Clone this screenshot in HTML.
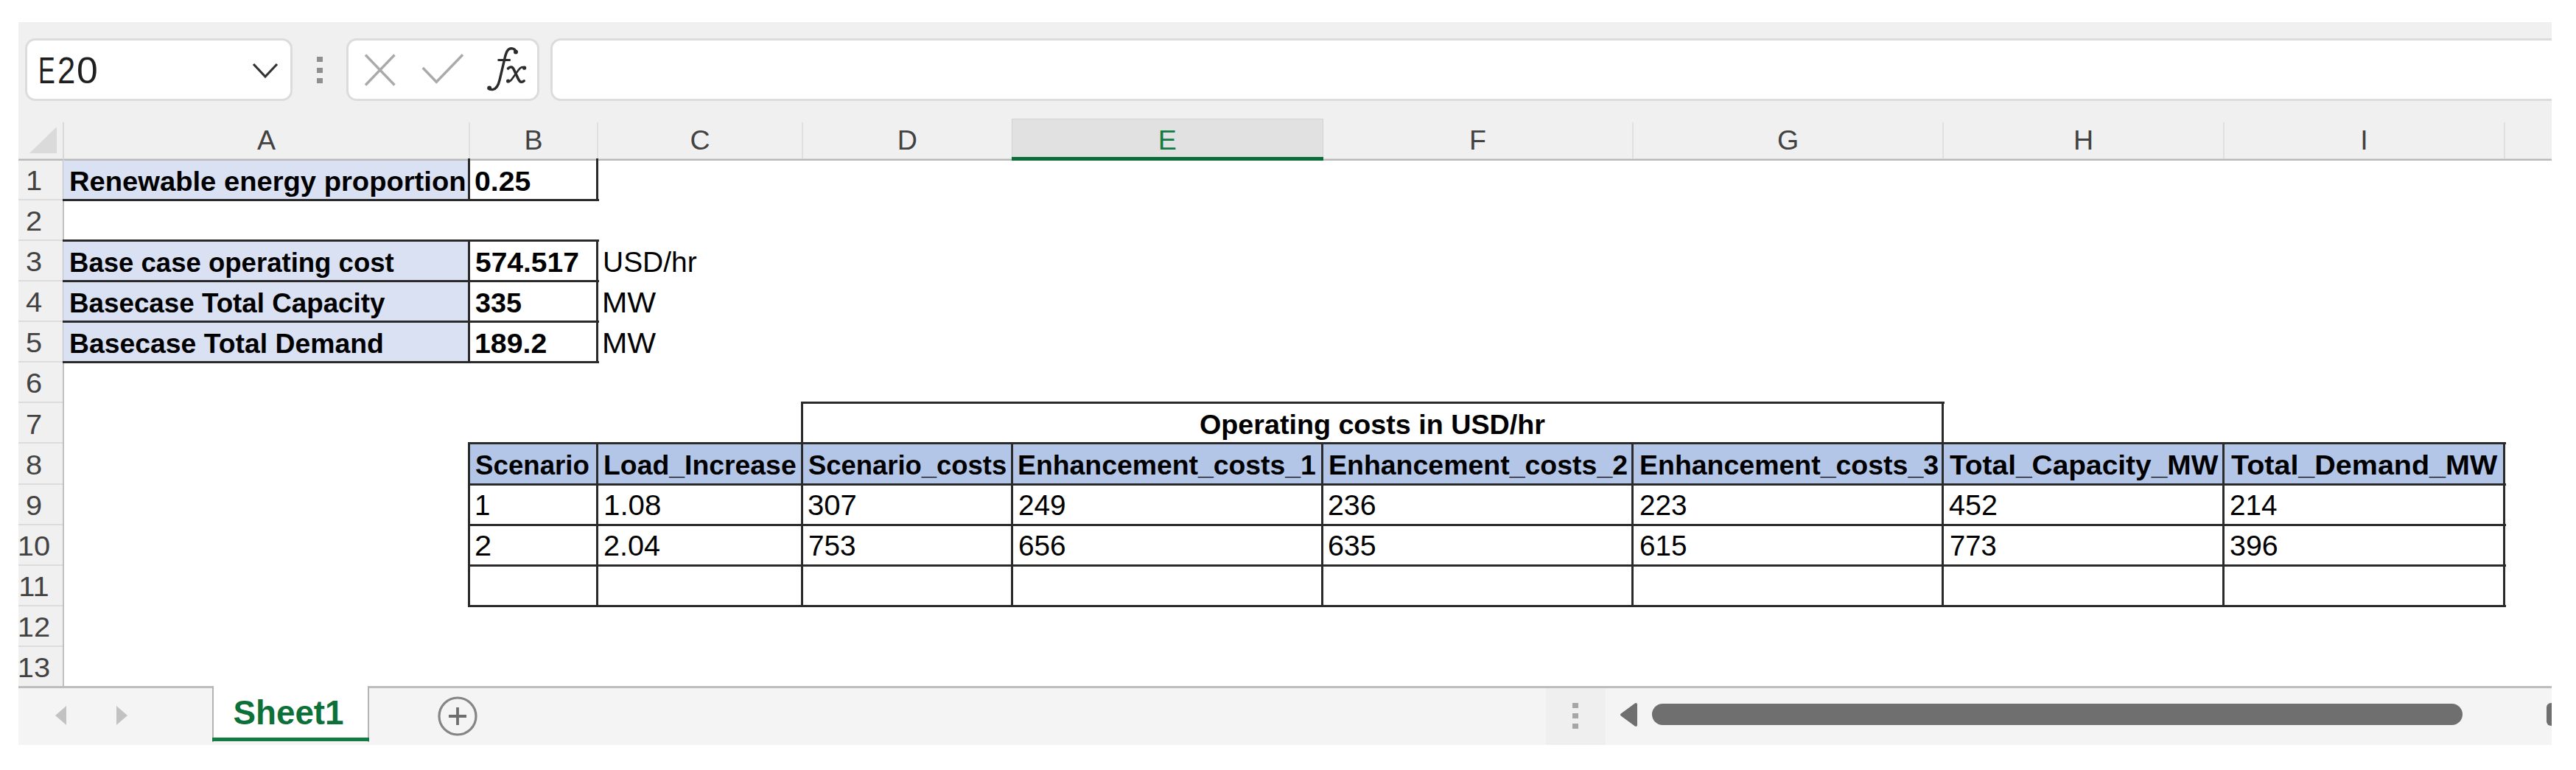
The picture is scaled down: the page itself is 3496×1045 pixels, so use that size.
<!DOCTYPE html><html><head><meta charset="utf-8"><style>
*{margin:0;padding:0;box-sizing:border-box}
html,body{width:3496px;height:1045px;background:#fff;overflow:hidden;position:relative;font-family:"Liberation Sans",sans-serif}
.a{position:absolute}
.t{position:absolute;white-space:pre;line-height:1;color:#000}
.b{font-weight:bold}
.hl{position:absolute;background:#2a2a2a}
</style></head><body><div class="a" style="left:25px;top:30px;width:3438px;height:981px;background:#f0f0f0"></div>
<div class="a" style="left:34px;top:52px;width:363px;height:85px;background:#fff;border:3px solid #dcdcdc;border-radius:14px"></div>
<div class="t" style="left:52.28px;top:71.8px;font-size:49.8px;color:#1f1f1f;transform:scaleX(0.686);transform-origin:0 0">E</div>
<div class="t" style="left:77.98px;top:71.8px;font-size:49.8px;color:#1f1f1f;transform:scaleX(0.876);transform-origin:0 0">2</div>
<div class="t" style="left:103.50px;top:71.8px;font-size:49.8px;color:#1f1f1f;transform:scaleX(1.038);transform-origin:0 0">0</div>
<svg class="a" style="left:335px;top:80px" width="50" height="32" viewBox="0 0 50 32"><path d="M9 7 L25 24 L41 7" fill="none" stroke="#333" stroke-width="3.2"/></svg>
<div class="a" style="left:430px;top:77px;width:8px;height:7px;background:#8f8f8f"></div>
<div class="a" style="left:430px;top:91.5px;width:8px;height:7px;background:#8f8f8f"></div>
<div class="a" style="left:430px;top:106px;width:8px;height:7px;background:#8f8f8f"></div>
<div class="a" style="left:470px;top:52px;width:262px;height:85px;background:#fff;border:3px solid #dcdcdc;border-radius:14px"></div>
<svg class="a" style="left:490px;top:70px" width="52" height="52" viewBox="0 0 52 52"><path d="M6 4.5 L45.5 45.5 M45.5 4.5 L6 45.5" fill="none" stroke="#aaaaaa" stroke-width="3.4"/></svg>
<svg class="a" style="left:570px;top:70px" width="64" height="50" viewBox="0 0 64 50"><path d="M3.8 22 L22.3 41.3 L58 4.3" fill="none" stroke="#aaaaaa" stroke-width="3.4"/></svg>
<svg class="a" style="left:0;top:0" width="760" height="140" viewBox="0 0 760 140"><path d="M699.8 70.2 C699.5 65.5 692 63.8 688.5 69 C686.6 72 685.6 76 684.6 81 L678.2 108 C676.6 115 674 121 668.5 121.6 C666 121.8 664.4 120.8 663.8 119.8" fill="none" stroke="#2b2b2b" stroke-width="3.4" stroke-linecap="round"/><circle cx="700" cy="70.5" r="3" fill="#2b2b2b"/><circle cx="664.2" cy="119.6" r="3" fill="#2b2b2b"/><path d="M675.5 81.5 H692.8" stroke="#2b2b2b" stroke-width="3"/><path d="M689.5 93 C692 90.2 695.5 90 697.2 94 L703.8 108 C705.6 111.8 708.6 112.2 711.2 109.8" fill="none" stroke="#2b2b2b" stroke-width="3.6" stroke-linecap="round"/><path d="M711.8 92 C709.6 90.2 706.8 91 704 94.6 L695 107 C693 110 691 111.2 689 109.8" fill="none" stroke="#2b2b2b" stroke-width="2.6" stroke-linecap="round"/><circle cx="711.6" cy="92.2" r="2.6" fill="#2b2b2b"/><circle cx="689.6" cy="110" r="2.6" fill="#2b2b2b"/></svg>
<div class="a" style="left:747px;top:52px;width:2800px;height:85px;background:#fff;border:3px solid #dcdcdc;border-radius:14px"></div>
<div class="a" style="left:3463px;top:0;width:40px;height:1045px;background:#fff"></div>
<div class="a" style="left:25px;top:214.5px;width:3438px;height:1px;background:#d6d6d6"></div>
<div class="a" style="left:25px;top:215.5px;width:3438px;height:2px;background:#b9b9b9"></div>
<div class="a" style="left:84.5px;top:166px;width:2.5px;height:50px;background:#d9d9d9"></div>
<div class="a" style="left:84.5px;top:216px;width:2.5px;height:716px;background:#c0c0c0"></div>
<svg class="a" style="left:40px;top:172px" width="38" height="36"><path d="M37 0 L37 36 L0 36 Z" fill="#dadada"/></svg>
<div class="a" style="left:87px;top:217.5px;width:3376px;height:714.5px;background:#fff"></div>
<div class="a" style="left:636.0px;top:166px;width:2px;height:49px;background:#e0e0e0"></div>
<div class="a" style="left:810.0px;top:166px;width:2px;height:49px;background:#e0e0e0"></div>
<div class="a" style="left:1088.0px;top:166px;width:2px;height:49px;background:#e0e0e0"></div>
<div class="a" style="left:1372.5px;top:166px;width:2px;height:49px;background:#e0e0e0"></div>
<div class="a" style="left:1794.0px;top:166px;width:2px;height:49px;background:#e0e0e0"></div>
<div class="a" style="left:2215.0px;top:166px;width:2px;height:49px;background:#e0e0e0"></div>
<div class="a" style="left:2636.0px;top:166px;width:2px;height:49px;background:#e0e0e0"></div>
<div class="a" style="left:3017.0px;top:166px;width:2px;height:49px;background:#e0e0e0"></div>
<div class="a" style="left:3398.0px;top:166px;width:2px;height:49px;background:#e0e0e0"></div>
<div class="a" style="left:1372.5px;top:160.5px;width:423.5px;height:57px;background:#e1e1e1;border:1.5px solid #d2d2d2;border-bottom:none"></div>
<div class="a" style="left:1372.5px;top:212.5px;width:423.5px;height:5.3px;background:#0a6c37"></div>
<div class="t" style="left:86px;width:551px;text-align:center;top:171.9px;font-size:37.6px;color:#424242">A</div>
<div class="t" style="left:637px;width:174px;text-align:center;top:171.9px;font-size:37.6px;color:#424242">B</div>
<div class="t" style="left:811px;width:278px;text-align:center;top:171.9px;font-size:37.6px;color:#424242">C</div>
<div class="t" style="left:1089px;width:284.5px;text-align:center;top:171.9px;font-size:37.6px;color:#424242">D</div>
<div class="t" style="left:1373.5px;width:421.5px;text-align:center;top:171.9px;font-size:37.6px;color:#107c41">E</div>
<div class="t" style="left:1795px;width:421px;text-align:center;top:171.9px;font-size:37.6px;color:#424242">F</div>
<div class="t" style="left:2216px;width:421px;text-align:center;top:171.9px;font-size:37.6px;color:#424242">G</div>
<div class="t" style="left:2637px;width:381px;text-align:center;top:171.9px;font-size:37.6px;color:#424242">H</div>
<div class="t" style="left:3018px;width:381px;text-align:center;top:171.9px;font-size:37.6px;color:#424242">I</div>
<div class="a" style="left:25px;top:270.1px;width:60px;height:2px;background:#dcdcdc"></div>
<div class="t" style="left:16px;width:60px;text-align:center;top:227.1px;font-size:37.6px;color:#424242;transform:scaleX(1.06);transform-origin:30px 0">1</div>
<div class="a" style="left:25px;top:325.1px;width:60px;height:2px;background:#dcdcdc"></div>
<div class="t" style="left:16px;width:60px;text-align:center;top:282.2px;font-size:37.6px;color:#424242;transform:scaleX(1.06);transform-origin:30px 0">2</div>
<div class="a" style="left:25px;top:380.2px;width:60px;height:2px;background:#dcdcdc"></div>
<div class="t" style="left:16px;width:60px;text-align:center;top:337.3px;font-size:37.6px;color:#424242;transform:scaleX(1.06);transform-origin:30px 0">3</div>
<div class="a" style="left:25px;top:435.2px;width:60px;height:2px;background:#dcdcdc"></div>
<div class="t" style="left:16px;width:60px;text-align:center;top:392.3px;font-size:37.6px;color:#424242;transform:scaleX(1.06);transform-origin:30px 0">4</div>
<div class="a" style="left:25px;top:490.3px;width:60px;height:2px;background:#dcdcdc"></div>
<div class="t" style="left:16px;width:60px;text-align:center;top:447.4px;font-size:37.6px;color:#424242;transform:scaleX(1.06);transform-origin:30px 0">5</div>
<div class="a" style="left:25px;top:545.4px;width:60px;height:2px;background:#dcdcdc"></div>
<div class="t" style="left:16px;width:60px;text-align:center;top:502.4px;font-size:37.6px;color:#424242;transform:scaleX(1.06);transform-origin:30px 0">6</div>
<div class="a" style="left:25px;top:600.4px;width:60px;height:2px;background:#dcdcdc"></div>
<div class="t" style="left:16px;width:60px;text-align:center;top:557.5px;font-size:37.6px;color:#424242;transform:scaleX(1.06);transform-origin:30px 0">7</div>
<div class="a" style="left:25px;top:655.5px;width:60px;height:2px;background:#dcdcdc"></div>
<div class="t" style="left:16px;width:60px;text-align:center;top:612.6px;font-size:37.6px;color:#424242;transform:scaleX(1.06);transform-origin:30px 0">8</div>
<div class="a" style="left:25px;top:710.5px;width:60px;height:2px;background:#dcdcdc"></div>
<div class="t" style="left:16px;width:60px;text-align:center;top:667.6px;font-size:37.6px;color:#424242;transform:scaleX(1.06);transform-origin:30px 0">9</div>
<div class="a" style="left:25px;top:765.6px;width:60px;height:2px;background:#dcdcdc"></div>
<div class="t" style="left:16px;width:60px;text-align:center;top:722.7px;font-size:37.6px;color:#424242;transform:scaleX(1.06);transform-origin:30px 0">10</div>
<div class="a" style="left:25px;top:820.7px;width:60px;height:2px;background:#dcdcdc"></div>
<div class="t" style="left:16px;width:60px;text-align:center;top:777.7px;font-size:37.6px;color:#424242;transform:scaleX(1.06);transform-origin:30px 0">11</div>
<div class="a" style="left:25px;top:875.7px;width:60px;height:2px;background:#dcdcdc"></div>
<div class="t" style="left:16px;width:60px;text-align:center;top:832.8px;font-size:37.6px;color:#424242;transform:scaleX(1.06);transform-origin:30px 0">12</div>
<div class="a" style="left:25px;top:930.8px;width:60px;height:2px;background:#dcdcdc"></div>
<div class="t" style="left:16px;width:60px;text-align:center;top:887.9px;font-size:37.6px;color:#424242;transform:scaleX(1.06);transform-origin:30px 0">13</div>
<div class="a" style="left:86px;top:216.5px;width:551px;height:55.06px;background:#d9e1f2"></div>
<div class="a" style="left:86px;top:326.62px;width:551px;height:55.06px;background:#d9e1f2"></div>
<div class="a" style="left:86px;top:381.68px;width:551px;height:55.06px;background:#d9e1f2"></div>
<div class="a" style="left:86px;top:436.74px;width:551px;height:55.06px;background:#d9e1f2"></div>
<div class="a" style="left:637px;top:601.9200000000001px;width:174px;height:55.06px;background:#b4c6e7"></div>
<div class="a" style="left:811px;top:601.9200000000001px;width:278px;height:55.06px;background:#b4c6e7"></div>
<div class="a" style="left:1089px;top:601.9200000000001px;width:284.5px;height:55.06px;background:#b4c6e7"></div>
<div class="a" style="left:1373.5px;top:601.9200000000001px;width:421.5px;height:55.06px;background:#b4c6e7"></div>
<div class="a" style="left:1795px;top:601.9200000000001px;width:421px;height:55.06px;background:#b4c6e7"></div>
<div class="a" style="left:2216px;top:601.9200000000001px;width:421px;height:55.06px;background:#b4c6e7"></div>
<div class="a" style="left:2637px;top:601.9200000000001px;width:381px;height:55.06px;background:#b4c6e7"></div>
<div class="a" style="left:3018px;top:601.9200000000001px;width:381px;height:55.06px;background:#b4c6e7"></div>
<div class="a" style="left:87px;top:214.5px;width:3376px;height:1px;background:#d6d6d6"></div>
<div class="a" style="left:87px;top:215.5px;width:3376px;height:2px;background:#b9b9b9"></div>
<div class="a" style="left:1372.5px;top:212.5px;width:423.5px;height:5.3px;background:#0a6c37"></div>
<div class="hl" style="left:84.5px;top:270.1px;width:728.0px;height:3.0px"></div>
<div class="hl" style="left:635.30px;top:215.0px;width:3.0px;height:58.1px"></div>
<div class="hl" style="left:809.30px;top:215.0px;width:3.0px;height:58.1px"></div>
<div class="hl" style="left:84.5px;top:325.1px;width:728.0px;height:3.0px"></div>
<div class="hl" style="left:84.5px;top:380.2px;width:728.0px;height:3.0px"></div>
<div class="hl" style="left:84.5px;top:435.2px;width:728.0px;height:3.0px"></div>
<div class="hl" style="left:84.5px;top:490.3px;width:728.0px;height:3.0px"></div>
<div class="hl" style="left:635.30px;top:325.1px;width:3.0px;height:168.2px"></div>
<div class="hl" style="left:809.30px;top:325.1px;width:3.0px;height:168.2px"></div>
<div class="hl" style="left:1087.5px;top:545.4px;width:1551.0px;height:3.0px"></div>
<div class="hl" style="left:1087.30px;top:545.4px;width:3.0px;height:58.1px"></div>
<div class="hl" style="left:2635.30px;top:545.4px;width:3.0px;height:58.1px"></div>
<div class="hl" style="left:635.5px;top:600.4px;width:2765.0px;height:3.0px"></div>
<div class="hl" style="left:635.5px;top:655.5px;width:2765.0px;height:3.0px"></div>
<div class="hl" style="left:635.5px;top:710.5px;width:2765.0px;height:3.0px"></div>
<div class="hl" style="left:635.5px;top:765.6px;width:2765.0px;height:3.0px"></div>
<div class="hl" style="left:635.5px;top:820.7px;width:2765.0px;height:3.0px"></div>
<div class="hl" style="left:635.30px;top:600.4px;width:3.0px;height:223.2px"></div>
<div class="hl" style="left:809.30px;top:600.4px;width:3.0px;height:223.2px"></div>
<div class="hl" style="left:1087.30px;top:600.4px;width:3.0px;height:223.2px"></div>
<div class="hl" style="left:1371.80px;top:600.4px;width:3.0px;height:223.2px"></div>
<div class="hl" style="left:1793.30px;top:600.4px;width:3.0px;height:223.2px"></div>
<div class="hl" style="left:2214.30px;top:600.4px;width:3.0px;height:223.2px"></div>
<div class="hl" style="left:2635.30px;top:600.4px;width:3.0px;height:223.2px"></div>
<div class="hl" style="left:3016.30px;top:600.4px;width:3.0px;height:223.2px"></div>
<div class="hl" style="left:3397.30px;top:600.4px;width:3.0px;height:223.2px"></div>
<div class="t b" style="left:93.94px;top:227.6px;font-size:37.0px;transform:scaleX(1.0313);transform-origin:0 0;">Renewable energy proportion</div>
<div class="t b" style="left:643.74px;top:227.6px;font-size:37.0px;transform:scaleX(1.0600);transform-origin:0 0;">0.25</div>
<div class="t b" style="left:93.72px;top:337.8px;font-size:37.0px;transform:scaleX(0.9876);transform-origin:0 0;">Base case operating cost</div>
<div class="t b" style="left:644.95px;top:337.8px;font-size:37.0px;transform:scaleX(1.0534);transform-origin:0 0;">574.517</div>
<div class="t" style="left:817.65px;top:336.7px;font-size:38.3px;transform:scaleX(1.0172);transform-origin:0 0;">USD/hr</div>
<div class="t b" style="left:93.71px;top:392.8px;font-size:37.0px;transform:scaleX(0.9937);transform-origin:0 0;">Basecase Total Capacity</div>
<div class="t b" style="left:644.98px;top:392.8px;font-size:37.0px;transform:scaleX(1.0200);transform-origin:0 0;">335</div>
<div class="t" style="left:817.47px;top:391.7px;font-size:38.3px;transform:scaleX(1.0754);transform-origin:0 0;">MW</div>
<div class="t b" style="left:93.68px;top:447.9px;font-size:37.0px;transform:scaleX(1.0091);transform-origin:0 0;">Basecase Total Demand</div>
<div class="t b" style="left:643.88px;top:447.9px;font-size:37.0px;transform:scaleX(1.0607);transform-origin:0 0;">189.2</div>
<div class="t" style="left:817.47px;top:446.8px;font-size:38.3px;transform:scaleX(1.0754);transform-origin:0 0;">MW</div>
<div class="t b" style="left:1628.23px;top:558.0px;font-size:37.0px;transform:scaleX(1.0182);transform-origin:0 0;">Operating costs in USD/hr</div>
<div class="t b" style="left:644.71px;top:613.1px;font-size:37.0px;transform:scaleX(0.9916);transform-origin:0 0;">Scenario</div>
<div class="t b" style="left:818.98px;top:613.1px;font-size:37.0px;transform:scaleX(1.0098);transform-origin:0 0;">Load_Increase</div>
<div class="t b" style="left:1096.82px;top:613.1px;font-size:37.0px;transform:scaleX(0.9841);transform-origin:0 0;">Scenario_costs</div>
<div class="t b" style="left:1381.48px;top:613.1px;font-size:37.0px;transform:scaleX(1.0095);transform-origin:0 0;">Enhancement_costs_1</div>
<div class="t b" style="left:1802.77px;top:613.1px;font-size:37.0px;transform:scaleX(1.0126);transform-origin:0 0;">Enhancement_costs_2</div>
<div class="t b" style="left:2224.77px;top:613.1px;font-size:37.0px;transform:scaleX(1.0126);transform-origin:0 0;">Enhancement_costs_3</div>
<div class="t b" style="left:2646.30px;top:613.1px;font-size:37.0px;transform:scaleX(1.0507);transform-origin:0 0;">Total_Capacity_MW</div>
<div class="t b" style="left:3028.30px;top:613.1px;font-size:37.0px;transform:scaleX(1.0670);transform-origin:0 0;">Total_Demand_MW</div>
<div class="t" style="left:644.28px;top:667.0px;font-size:38.3px;transform:scaleX(1.0059);transform-origin:0 0;">1</div>
<div class="t" style="left:819.05px;top:667.0px;font-size:38.3px;transform:scaleX(1.0514);transform-origin:0 0;">1.08</div>
<div class="t" style="left:1096.11px;top:667.0px;font-size:38.3px;transform:scaleX(1.0467);transform-origin:0 0;">307</div>
<div class="t" style="left:1382.48px;top:667.0px;font-size:38.3px;transform:scaleX(1.0115);transform-origin:0 0;">249</div>
<div class="t" style="left:1802.35px;top:667.0px;font-size:38.3px;transform:scaleX(1.0267);transform-origin:0 0;">236</div>
<div class="t" style="left:2224.78px;top:667.0px;font-size:38.3px;transform:scaleX(1.0100);transform-origin:0 0;">223</div>
<div class="t" style="left:2645.27px;top:667.0px;font-size:38.3px;transform:scaleX(1.0311);transform-origin:0 0;">452</div>
<div class="t" style="left:3026.28px;top:667.0px;font-size:38.3px;transform:scaleX(1.0115);transform-origin:0 0;">214</div>
<div class="t" style="left:644.32px;top:722.1px;font-size:38.3px;transform:scaleX(1.0882);transform-origin:0 0;">2</div>
<div class="t" style="left:818.93px;top:722.1px;font-size:38.3px;transform:scaleX(1.0347);transform-origin:0 0;">2.04</div>
<div class="t" style="left:1097.28px;top:722.1px;font-size:38.3px;transform:scaleX(1.0100);transform-origin:0 0;">753</div>
<div class="t" style="left:1382.48px;top:722.1px;font-size:38.3px;transform:scaleX(1.0115);transform-origin:0 0;">656</div>
<div class="t" style="left:1802.35px;top:722.1px;font-size:38.3px;transform:scaleX(1.0267);transform-origin:0 0;">635</div>
<div class="t" style="left:2224.78px;top:722.1px;font-size:38.3px;transform:scaleX(1.0100);transform-origin:0 0;">615</div>
<div class="t" style="left:2646.01px;top:722.1px;font-size:38.3px;transform:scaleX(0.9967);transform-origin:0 0;">773</div>
<div class="t" style="left:3026.24px;top:722.1px;font-size:38.3px;transform:scaleX(1.0283);transform-origin:0 0;">396</div>
<div class="a" style="left:25px;top:933px;width:3438px;height:78px;background:#f4f4f4"></div>
<div class="a" style="left:25px;top:931px;width:3438px;height:2.5px;background:#bdbdbd"></div>
<svg class="a" style="left:70px;top:955px" width="24" height="32"><path d="M20 3 L5 16 L20 29 Z" fill="#c2c2c2"/></svg>
<svg class="a" style="left:154px;top:955px" width="24" height="32"><path d="M4 3 L19 16 L4 29 Z" fill="#c2c2c2"/></svg>
<div class="a" style="left:288px;top:931px;width:213px;height:76px;background:#fff;border-left:2.5px solid #b4b4b4;border-right:2.5px solid #b4b4b4"></div>
<div class="a" style="left:288px;top:1000.5px;width:213px;height:5px;background:#107c41"></div>
<div class="t b" style="left:285px;width:213px;text-align:center;top:944.7px;font-size:45.8px;color:#0c7139">Sheet1</div>
<svg class="a" style="left:590px;top:942px" width="62" height="62"><circle cx="31" cy="30" r="25" fill="none" stroke="#858585" stroke-width="3.2"/><path d="M31 18 V42 M19 30 H43" stroke="#6e6e6e" stroke-width="3.8"/></svg>
<div class="a" style="left:2098px;top:934px;width:81px;height:77px;background:#efefef"></div>
<div class="a" style="left:2133.5px;top:953.5px;width:8px;height:7px;background:#a6a6a6"></div>
<div class="a" style="left:2133.5px;top:968px;width:8px;height:7px;background:#a6a6a6"></div>
<div class="a" style="left:2133.5px;top:982px;width:8px;height:7px;background:#a6a6a6"></div>
<svg class="a" style="left:2195px;top:950px" width="32" height="40"><path d="M25 6 L25 34 L6 20 Z" fill="#6f6f6f" stroke="#6f6f6f" stroke-width="4" stroke-linejoin="round"/></svg>
<div class="a" style="left:2241.5px;top:955px;width:1100.5px;height:29px;background:#6f6f6f;border-radius:14.5px"></div>
<div class="a" style="left:3455.5px;top:954px;width:20px;height:31px;background:#6f6f6f;border-radius:6px"></div>
<div class="a" style="left:3463px;top:0;width:40px;height:1045px;background:#fff"></div></body></html>
